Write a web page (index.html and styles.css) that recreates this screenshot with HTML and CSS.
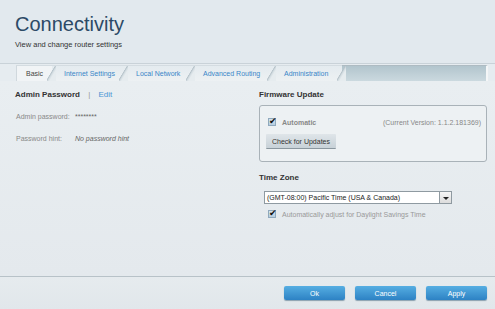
FILE: index.html
```html
<!DOCTYPE html>
<html lang="en">
  <head>
    <meta charset="UTF-8" />
    <title>Connectivity</title>
    <link rel="stylesheet" href="styles.css">
  </head>
  <body>
    <div class="header">
      <h1 class="title">Connectivity</h1>
      <p class="subtitle">View and change router settings</p>
    </div>

    <div class="tabbar">
      <span class="tab active">Basic</span>
      <span class="tab">Internet Settings</span>
      <span class="tab">Local Network</span>
      <span class="tab">Advanced Routing</span>
      <span class="tab">Administration</span>
      <span class="tab-rest"></span>
    </div>

    <div class="content">
      <div class="col left">
        <div class="section-title">Admin Password <span class="sep">|</span> <a class="edit">Edit</a></div>
        <div class="field"><span class="label">Admin password:</span> <span class="value">********</span></div>
        <div class="field"><span class="label">Password hint:</span> <span class="value italic">No password hint</span></div>
      </div>

      <div class="col right">
        <div class="section-title">Firmware Update</div>
        <div class="box">
          <div class="box-row">
            <span class="check"><span class="tick">✔</span></span>
            <span class="auto">Automatic</span>
            <span class="version">(Current Version: 1.1.2.181369)</span>
          </div>
          <button class="grey-btn">Check for Updates</button>
        </div>

        <div class="section-title tz">Time Zone</div>
        <div class="select">
          <span class="select-text">(GMT-08:00) Pacific Time (USA &amp; Canada)</span>
          <span class="select-arrow"></span>
        </div>
        <div class="dst">
          <span class="check"><span class="tick">✔</span></span>
          <span>Automatically adjust for Daylight Savings Time</span>
        </div>
      </div>
    </div>

    <div class="footer">
      <button class="blue-btn">Ok</button>
      <button class="blue-btn">Cancel</button>
      <button class="blue-btn">Apply</button>
    </div>
  </body>
</html>
```

FILE: styles.css
```css
* {
  margin: 0;
  padding: 0;
  box-sizing: border-box;
}
body {
  width: 495px;
  height: 309px;
  overflow: hidden;
  font-family: "Liberation Sans", Arial, sans-serif;
  background: #e6ecf0;
  color: #333;
}

/* header */
.header {
  height: 64px;
  padding: 12px 0 0 15px;
  background: #e2e9ee;
  border-bottom: 1px solid #c9d2d8;
}
.title {
  font-size: 20px;
  font-weight: normal;
  color: #2c4a66;
  line-height: 24px;
}
.subtitle {
  font-size: 7.5px;
  margin-top: 4px;
  color: #333;
}

/* tabs */
.tabbar {
  display: flex;
  height: 16px;
  margin: 1px 0 0 16px;
  width: 472px;
}
.tab {
  position: relative;
  font-size: 7px;
  line-height: 15px;
  color: #3a86c8;
  padding: 0 0 0 12px;
  background: linear-gradient(#e4ebef, #edf1f3);
  border-top: 1px solid #d4dce1;
}
.tab:nth-child(2) { width: 72px; }
.tab:nth-child(3) { width: 67px; }
.tab:nth-child(4) { width: 81px; }
.tab:nth-child(5) { width: 70px; }
.tab.active {
  width: 36px;
  color: #444;
  padding-left: 9px;
  background: #f1f4f6;
  border-left: 1px solid #d0d8dd;
}
.tab::after {
  content: "";
  position: absolute;
  right: -4px;
  top: 0;
  width: 9px;
  height: 15px;
  background: linear-gradient(to bottom right, transparent 42%, #b4c1c8 46%, #d5dee3 54%, #e6ecef 64%);
  z-index: 1;
}
.tab-rest {
  flex: 1;
  background: linear-gradient(#b2c5cd, #cbd9df);
  border-top: 1px solid #aebbc2;
  border-right: 2px solid #f4f6f7;
}

/* content */
.content {
  display: flex;
  height: 195px;
  padding: 9px 8px 0 15px;
  background: linear-gradient(#e9eef1, #e4e9ed);
}
.col.left {
  width: 244px;
}
.col.right {
  flex: 1;
}
.section-title {
  font-size: 8px;
  font-weight: bold;
  color: #333;
  line-height: 10px;
}
.sep {
  color: #999;
  font-weight: normal;
  margin: 0 6px 0 6px;
}
.edit {
  color: #4a95d4;
  font-weight: normal;
}
.field {
  font-size: 7px;
  color: #888;
  margin-top: 12px;
  line-height: 10px;
  padding-left: 1px;
}
.label {
  display: inline-block;
  width: 57px;
}
.field .value {
  color: #666;
}
.italic {
  font-style: italic;
}

.box {
  margin-top: 5px;
  height: 57px;
  border: 1px solid #a9b2b8;
  border-radius: 3px;
  background: #edf1f3;
  padding: 12px 5px 0 8px;
}
.box-row {
  display: flex;
  align-items: center;
  font-size: 7px;
  color: #888;
}
.check {
  width: 8px;
  height: 8px;
  background: linear-gradient(#d5e3ee, #b7cde0);
  border: 1px solid #8fa9bd;
  position: relative;
  margin-right: 6px;
}
.tick {
  position: absolute;
  left: 0;
  top: -3px;
  font-size: 9px;
  color: #111;
}
.auto {
  font-weight: bold;
}
.version {
  margin-left: auto;
}
.grey-btn {
  display: block;
  margin: 8px 0 0 -2px;
  width: 70px;
  height: 14px;
  font-family: inherit;
  font-size: 7px;
  color: #333;
  border: none;
  border-radius: 1px;
  background: linear-gradient(#dfe5e9, #c8d2d8);
  box-shadow: 0 1px 0 #8a979f;
}

.tz {
  margin-top: 11px;
}
.select {
  display: flex;
  margin: 8px 0 0 5px;
  width: 188px;
  height: 13px;
  background: #fff;
  border: 1px solid #8f9aa1;
}
.select-text {
  flex: 1;
  font-size: 7px;
  line-height: 11px;
  padding-left: 2px;
  color: #222;
}
.select-arrow {
  width: 12px;
  border-left: 1px solid #8f9aa1;
  background: linear-gradient(#f6f6f6, #dcdcdc);
  position: relative;
}
.select-arrow::after {
  content: "";
  position: absolute;
  left: 3px;
  top: 5px;
  border-left: 3px solid transparent;
  border-right: 3px solid transparent;
  border-top: 3px solid #222;
}
.dst {
  display: flex;
  align-items: center;
  margin: 6px 0 0 9px;
  font-size: 7px;
  color: #999;
}

/* footer */
.footer {
  height: 33px;
  border-top: 1px solid #b8c2c8;
  background: linear-gradient(#e6ebee, #e1e7eb);
  display: flex;
  justify-content: flex-end;
  gap: 10px;
  padding: 9px 8px 0 0;
}
.blue-btn {
  width: 61px;
  height: 14px;
  font-family: inherit;
  font-size: 7px;
  color: #fff;
  border: none;
  border-radius: 2px;
  background: linear-gradient(#56aee2, #2d82c4);
  box-shadow: 0 1px 1px #8aa0b0;
}
```
